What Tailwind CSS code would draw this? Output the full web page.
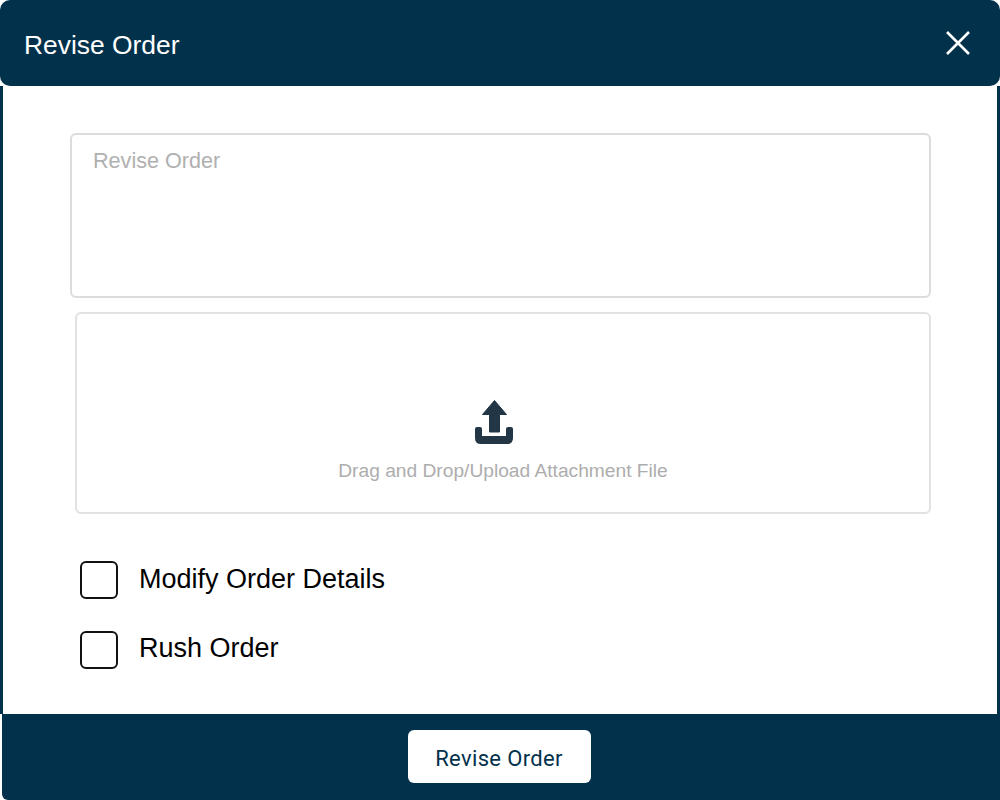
<!DOCTYPE html>
<html lang="en">
<head>
  <meta charset="UTF-8" />
  <title>Revise Order</title>
  <script src="https://cdn.jsdelivr.net/npm/@tailwindcss/browser@4"></script>
</head>
<body class="bg-white font-['Liberation_Sans',sans-serif]">
  <div class="w-[1000px] h-[800px] flex flex-col overflow-hidden">
    <!-- header -->
    <div class="h-[86px] shrink-0 bg-[#02314c] rounded-[10px] flex items-center justify-between pl-6 pr-[29px]">
      <h2 class="text-[26.4px] text-white pt-[6px]">Revise Order</h2>
      <button>
        <svg class="w-[26px] h-[26px] block" viewBox="0 0 26 26" fill="none" stroke="#fff" stroke-width="2.6"><path d="M2 2 L24 24 M24 2 L2 24" /></svg>
      </button>
    </div>

    <!-- body -->
    <div class="flex-1 bg-white border-l-[3px] border-r-[3px] border-[#02314c] pt-[47px] pl-[67px] pr-[66px] flex flex-col">
      <div class="h-[165px] border-2 border-[#dcdcdc] rounded-md pl-[21px] pt-3 text-[21.6px] leading-[28px] text-[#b0b0b0]">Revise Order</div>
      <div class="ml-[5px] mt-[14px] h-[202px] border-2 border-[#e2e2e2] rounded-md flex flex-col items-center pt-[86px]">
        <svg class="w-10 h-[46px] block mr-[18px]" viewBox="0 0 40 46" fill="#233646">
          <path d="M20.5 0.5 L32.5 14.5 H25.5 V32 H15.5 V14.5 H8.5 Z" stroke="#233646" stroke-width="1" stroke-linejoin="round" />
          <path d="M3 27 H6 Q8 27 8 29 V36 H32 V29 Q32 27 34 27 H37 Q39 27 39 29 V38 Q39 44 33 44 H7 Q1 44 1 38 V29 Q1 27 3 27 Z" />
        </svg>
        <p class="mt-[13px] text-[19.2px] leading-[24px] text-[#adadad]">Drag and Drop/Upload Attachment File</p>
      </div>
      <label class="ml-[10px] mt-[47px] h-[38px] flex items-center gap-[21px] text-[27px] text-black">
        <span class="w-[38px] h-[38px] border-2 border-[#111] rounded-md"></span>
        <span class="pb-[1px]">Modify Order Details</span>
      </label>
      <label class="ml-[10px] mt-[32px] h-[38px] flex items-center gap-[21px] text-[27px] text-black">
        <span class="w-[38px] h-[38px] border-2 border-[#111] rounded-md"></span>
        <span class="pb-[3px]">Rush Order</span>
      </label>
    </div>

    <!-- footer -->
    <div class="h-[86px] shrink-0 ml-[2px] bg-[#02314c] rounded-bl-[6px] flex justify-center pt-4 pr-1">
      <button class="w-[183px] h-[53px] pt-[3px] bg-white rounded-md font-['Roboto',sans-serif] text-[22px] tracking-[0.35px] text-[#02314c]">Revise Order</button>
    </div>
  </div>
</body>
</html>
